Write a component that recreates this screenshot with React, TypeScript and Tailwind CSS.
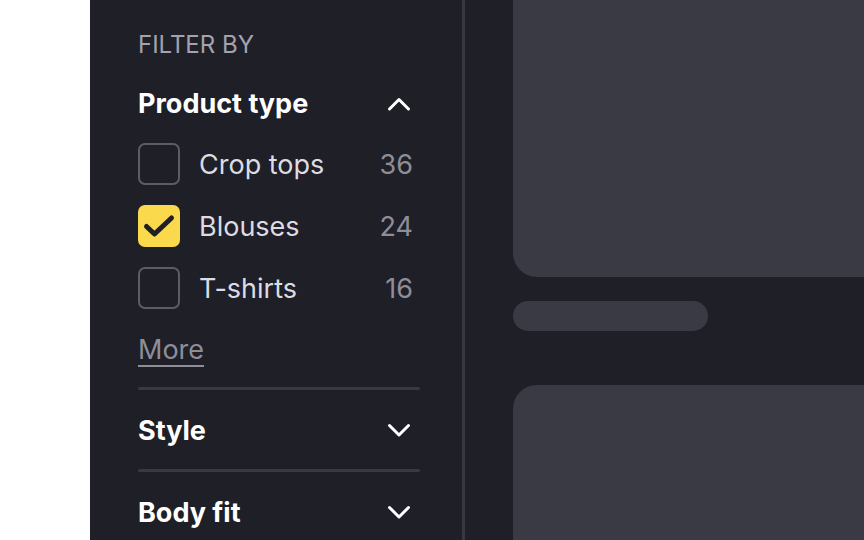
import React from "react";

const font = { fontFamily: "Inter, 'Noto Sans', sans-serif" };

function Chevron({ up }: { up?: boolean }) {
  return (
    <svg width="24" height="16" viewBox="0 0 24 16" fill="none" className="mr-[9px]">
      <path
        d={up ? "M2.5 13 L12 3.5 L21.5 13" : "M2.5 3.5 L12 13 L21.5 3.5"}
        stroke="#ffffff"
        strokeWidth="3"
        strokeLinecap="round"
        strokeLinejoin="round"
      />
    </svg>
  );
}

function CheckRow({ label, count, checked }: { label: string; count: number; checked?: boolean }) {
  return (
    <div className="flex h-[42px] items-center">
      {checked ? (
        <div className="flex h-[42px] w-[42px] items-center justify-center rounded-[7px] bg-[#fbd94c]">
          <svg width="42" height="42" viewBox="0 0 42 42" fill="none">
            <path d="M8.5 21.5 L16.5 29 L33.5 13" stroke="#1f1f28" strokeWidth="5" strokeLinecap="round" strokeLinejoin="round" />
          </svg>
        </div>
      ) : (
        <div className="h-[42px] w-[42px] rounded-[7px] border-2 border-[#5c5c67]" />
      )}
      <span className="ml-[19px] flex-1 pt-[3px] text-[27px] text-[#dcdce2]">{label}</span>
      <span className="mr-[7px] pt-[3px] text-[27px] text-[#8e8e99]">{count}</span>
    </div>
  );
}

export default function App() {
  return (
    <div className="flex h-[540px] w-[864px] overflow-hidden bg-white" style={font}>
      <div className="w-[90px] shrink-0 bg-white" />
      <aside className="w-[375px] shrink-0 overflow-hidden border-r-[3px] border-[#383842] bg-[#1f1f28] pl-12 pr-[42px] pt-[31px]">
        <div className="text-[24px] leading-[28px] text-[#a3a3ad]">FILTER BY</div>
        <div className="mt-[25px] flex h-[40px] items-center justify-between">
          <span className="pt-[1px] text-[27px] font-bold text-white">Product type</span>
          <Chevron up />
        </div>
        <div className="mt-[19px] flex flex-col gap-[20px]">
          <CheckRow label="Crop tops" count={36} />
          <CheckRow label="Blouses" count={24} checked />
          <CheckRow label="T-shirts" count={16} />
        </div>
        <div className="mt-[25px] h-[30px] pt-[1px] text-[27px] leading-[30px] text-[#8e8e99]">
          <span className="underline decoration-2 underline-offset-[6px]">More</span>
        </div>
        <div className="mt-[23px] h-[3px] rounded-full bg-[#393943]" />
        <div className="flex h-[79px] items-center justify-between">
          <span className="pt-[3px] text-[27px] font-bold text-white">Style</span>
          <Chevron />
        </div>
        <div className="h-[3px] rounded-full bg-[#393943]" />
        <div className="flex h-[79px] items-center justify-between">
          <span className="pt-[3px] text-[27px] font-bold text-white">Body fit</span>
          <Chevron />
        </div>
      </aside>
      <main className="flex flex-1 flex-col bg-[#1f1f28] pl-[48px]">
        <div className="h-[277px] shrink-0 rounded-bl-[24px] bg-[#3a3a44]" />
        <div className="mt-[24px] h-[30px] w-[195px] shrink-0 rounded-full bg-[#3a3a44]" />
        <div className="mt-[54px] flex-1 rounded-tl-[24px] bg-[#3a3a44]" />
      </main>
    </div>
  );
}
